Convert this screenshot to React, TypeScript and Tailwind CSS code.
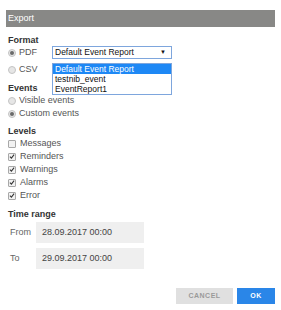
import React from "react";

function Radio({ checked, label }: { checked?: boolean; label: string }) {
  return (
    <div className="flex items-center h-[13px]">
      <span className="w-[8px] h-[8px] rounded-full border border-[#c4c4c4] bg-[#e6e6e6] flex items-center justify-center ml-[8px]">
        {checked && <span className="w-[4px] h-[4px] rounded-full bg-[#6a6a6a]" />}
      </span>
      <span className="ml-[3px] text-[9px] text-[#555]">{label}</span>
    </div>
  );
}

function Check({ checked, label }: { checked?: boolean; label: string }) {
  return (
    <div className="flex items-center h-[13px]">
      <span className="w-[8px] h-[8px] border border-[#a8a8a8] bg-[#f2f2f2] ml-[8px] flex items-center justify-center rounded-[1px]">
        {checked && (
          <svg width="7" height="7" viewBox="0 0 8 8">
            <path d="M1.2 4.2 L3.2 6.2 L6.8 1.5" fill="none" stroke="#333" strokeWidth="1.4" />
          </svg>
        )}
      </span>
      <span className="ml-[4px] text-[9px] text-[#555]">{label}</span>
    </div>
  );
}

export default function App() {
  return (
    <div
      className="w-[281px] h-[310px] bg-white relative overflow-hidden"
      style={{ fontFamily: '"Liberation Sans", Arial, sans-serif' }}
    >
      <div className="mx-[6px] mt-[10px] h-[17px] bg-[#888886] text-white text-[9px] leading-[17px] pl-[2px]">
        Export
      </div>

      <div className="mt-[7px] h-[12px] leading-[12px] pl-[8px] text-[9px] font-bold text-[#333]">Format</div>

      <div className="flex">
        <div className="w-[52px] flex flex-col gap-[4px]">
          <Radio checked label="PDF" />
          <Radio label="CSV" />
        </div>
        <div className="relative">
          <div className="w-[120px] h-[13px] border border-[#7ea6dd] flex items-center justify-between pl-[2px] pr-[5px] text-[8.5px] text-[#111] bg-white">
            <span>Default Event Report</span>
            <span className="text-[6px]">▼</span>
          </div>
          <div className="absolute left-0 top-[17px] w-[120px] border border-[#7ea6dd] bg-white text-[8.5px] text-[#111] z-10">
            <div className="h-[10px] leading-[10px] bg-[#1e88f5] text-white pl-[2px]">Default Event Report</div>
            <div className="h-[10px] leading-[10px] pl-[2px]">testnib_event</div>
            <div className="h-[10px] leading-[10px] pl-[2px]">EventReport1</div>
          </div>
        </div>
      </div>

      <div className="mt-[6px] h-[12px] leading-[12px] pl-[8px] text-[9px] font-bold text-[#333]">Events</div>
      <Radio label="Visible events" />
      <Radio checked label="Custom events" />

      <div className="mt-[5px] h-[12px] leading-[12px] pl-[8px] text-[9px] font-bold text-[#333]">Levels</div>
      <Check label="Messages" />
      <Check checked label="Reminders" />
      <Check checked label="Warnings" />
      <Check checked label="Alarms" />
      <Check checked label="Error" />

      <div className="mt-[6px] h-[12px] leading-[12px] pl-[8px] text-[9px] font-bold text-[#333]">Time range</div>

      <div className="mt-[2px] flex flex-col gap-[5px]">
        <div className="flex items-center">
          <span className="w-[36px] pl-[10px] text-[9px] text-[#666]">From</span>
          <div className="w-[108px] h-[21px] bg-[#efefef] flex items-center pl-[6px] text-[9px] text-[#444]">28.09.2017 00:00</div>
        </div>
        <div className="flex items-center">
          <span className="w-[36px] pl-[10px] text-[9px] text-[#666]">To</span>
          <div className="w-[108px] h-[21px] bg-[#efefef] flex items-center pl-[6px] text-[9px] text-[#444]">29.09.2017 00:00</div>
        </div>
      </div>

      <div className="mt-[19px] flex justify-end gap-[4px] pr-[6px]">
        <div className="w-[57px] h-[16px] bg-[#e0e0e0] text-[#9a9a9a] text-[7px] font-bold tracking-[0.5px] flex items-center justify-center">
          CANCEL
        </div>
        <div className="w-[38px] h-[16px] bg-[#2a86e8] text-white text-[7px] font-bold tracking-[0.5px] flex items-center justify-center">
          OK
        </div>
      </div>
    </div>
  );
}
